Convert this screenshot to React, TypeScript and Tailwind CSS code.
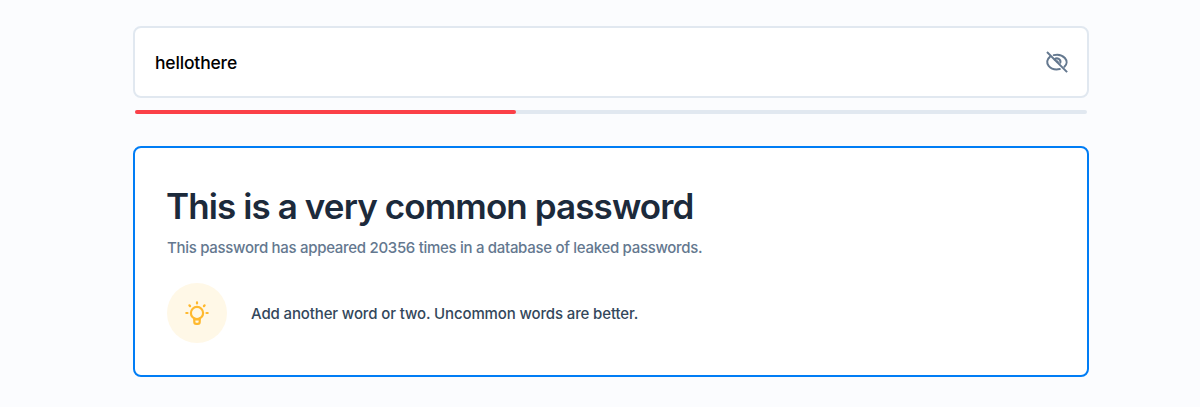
function EyeOffIcon() {
  return (
    <svg width="24" height="24" viewBox="0 0 24 24" fill="none" stroke="#64788f" strokeWidth="2" strokeLinecap="round">
      <path d="M8.7 5.1A9.9 7.4 0 0 1 19.4 16.8" />
      <path d="M4.9 6.9A9.9 7.4 0 0 0 14.8 19.1" />
      <path d="M9.6 9.5A3.4 3.4 0 0 1 15.3 12.8" />
      <path d="M12 11.2L12.8 12" />
      <path d="M2.7 2.7L21.4 21.4" strokeLinecap="square" />
    </svg>
  );
}

function BulbIcon() {
  return (
    <svg width="24" height="24" viewBox="0 0 24 24" fill="none" stroke="#ffb92e" strokeWidth="2.2" strokeLinecap="round" strokeLinejoin="round">
      <circle cx="12" cy="12" r="6.1" />
      <path d="M9.3 17.8V21A1.8 1.8 0 0 0 11.1 22.8H12.9A1.8 1.8 0 0 0 14.7 21V17.8" />
      <path d="M9.5 18.4H14.5M12 1.3V2.5M4.4 4.4L5.1 5.1M19.6 4.4L18.9 5.1M1.3 12H2.5M21.5 12H22.7" />
    </svg>
  );
}

export default function App() {
  return (
    <main className="h-[407px] bg-[#fbfcfe] pt-[26px] font-['Inter',sans-serif]">
      <div className="mx-auto w-[956px] translate-x-[11px]">
        <div className="flex h-[72px] items-center justify-between rounded-lg border-2 border-[#e1e8f0] bg-white pr-[18px] pl-5">
          <span className="pt-0.5 text-[17.5px] font-medium leading-6 tracking-[-0.17px] text-black">hellothere</span>
          <button type="button" aria-label="Hide password">
            <EyeOffIcon />
          </button>
        </div>
        <div className="mx-0.5 mt-3 h-1 rounded-full bg-[#e1e8f0]">
          <div className="h-1 w-[40%] rounded-full bg-[#fb4048]" />
        </div>
        <section className="mt-8 h-[231px] rounded-lg border-2 border-[#007df5] bg-white px-8 pt-[35px]">
          <h1 className="-ml-px whitespace-nowrap text-[35px] font-semibold leading-[46px] tracking-[-0.9px] text-[#1c2a3b]">
            This is a very common password
          </h1>
          <p className="mt-[7px] whitespace-nowrap text-[15px] font-medium leading-6 tracking-[-0.3px] text-[#64788f]">
            This password has appeared 20356 times in a database of leaked passwords.
          </p>
          <div className="mt-[23px] flex items-center gap-6">
            <div className="flex size-[60px] items-center justify-center rounded-full bg-[#fff8e7]">
              <BulbIcon />
            </div>
            <p className="whitespace-nowrap pt-0.5 text-[15px] font-medium leading-6 tracking-[-0.13px] text-[#33475b]">
              Add another word or two. Uncommon words are better.
            </p>
          </div>
        </section>
      </div>
    </main>
  );
}
